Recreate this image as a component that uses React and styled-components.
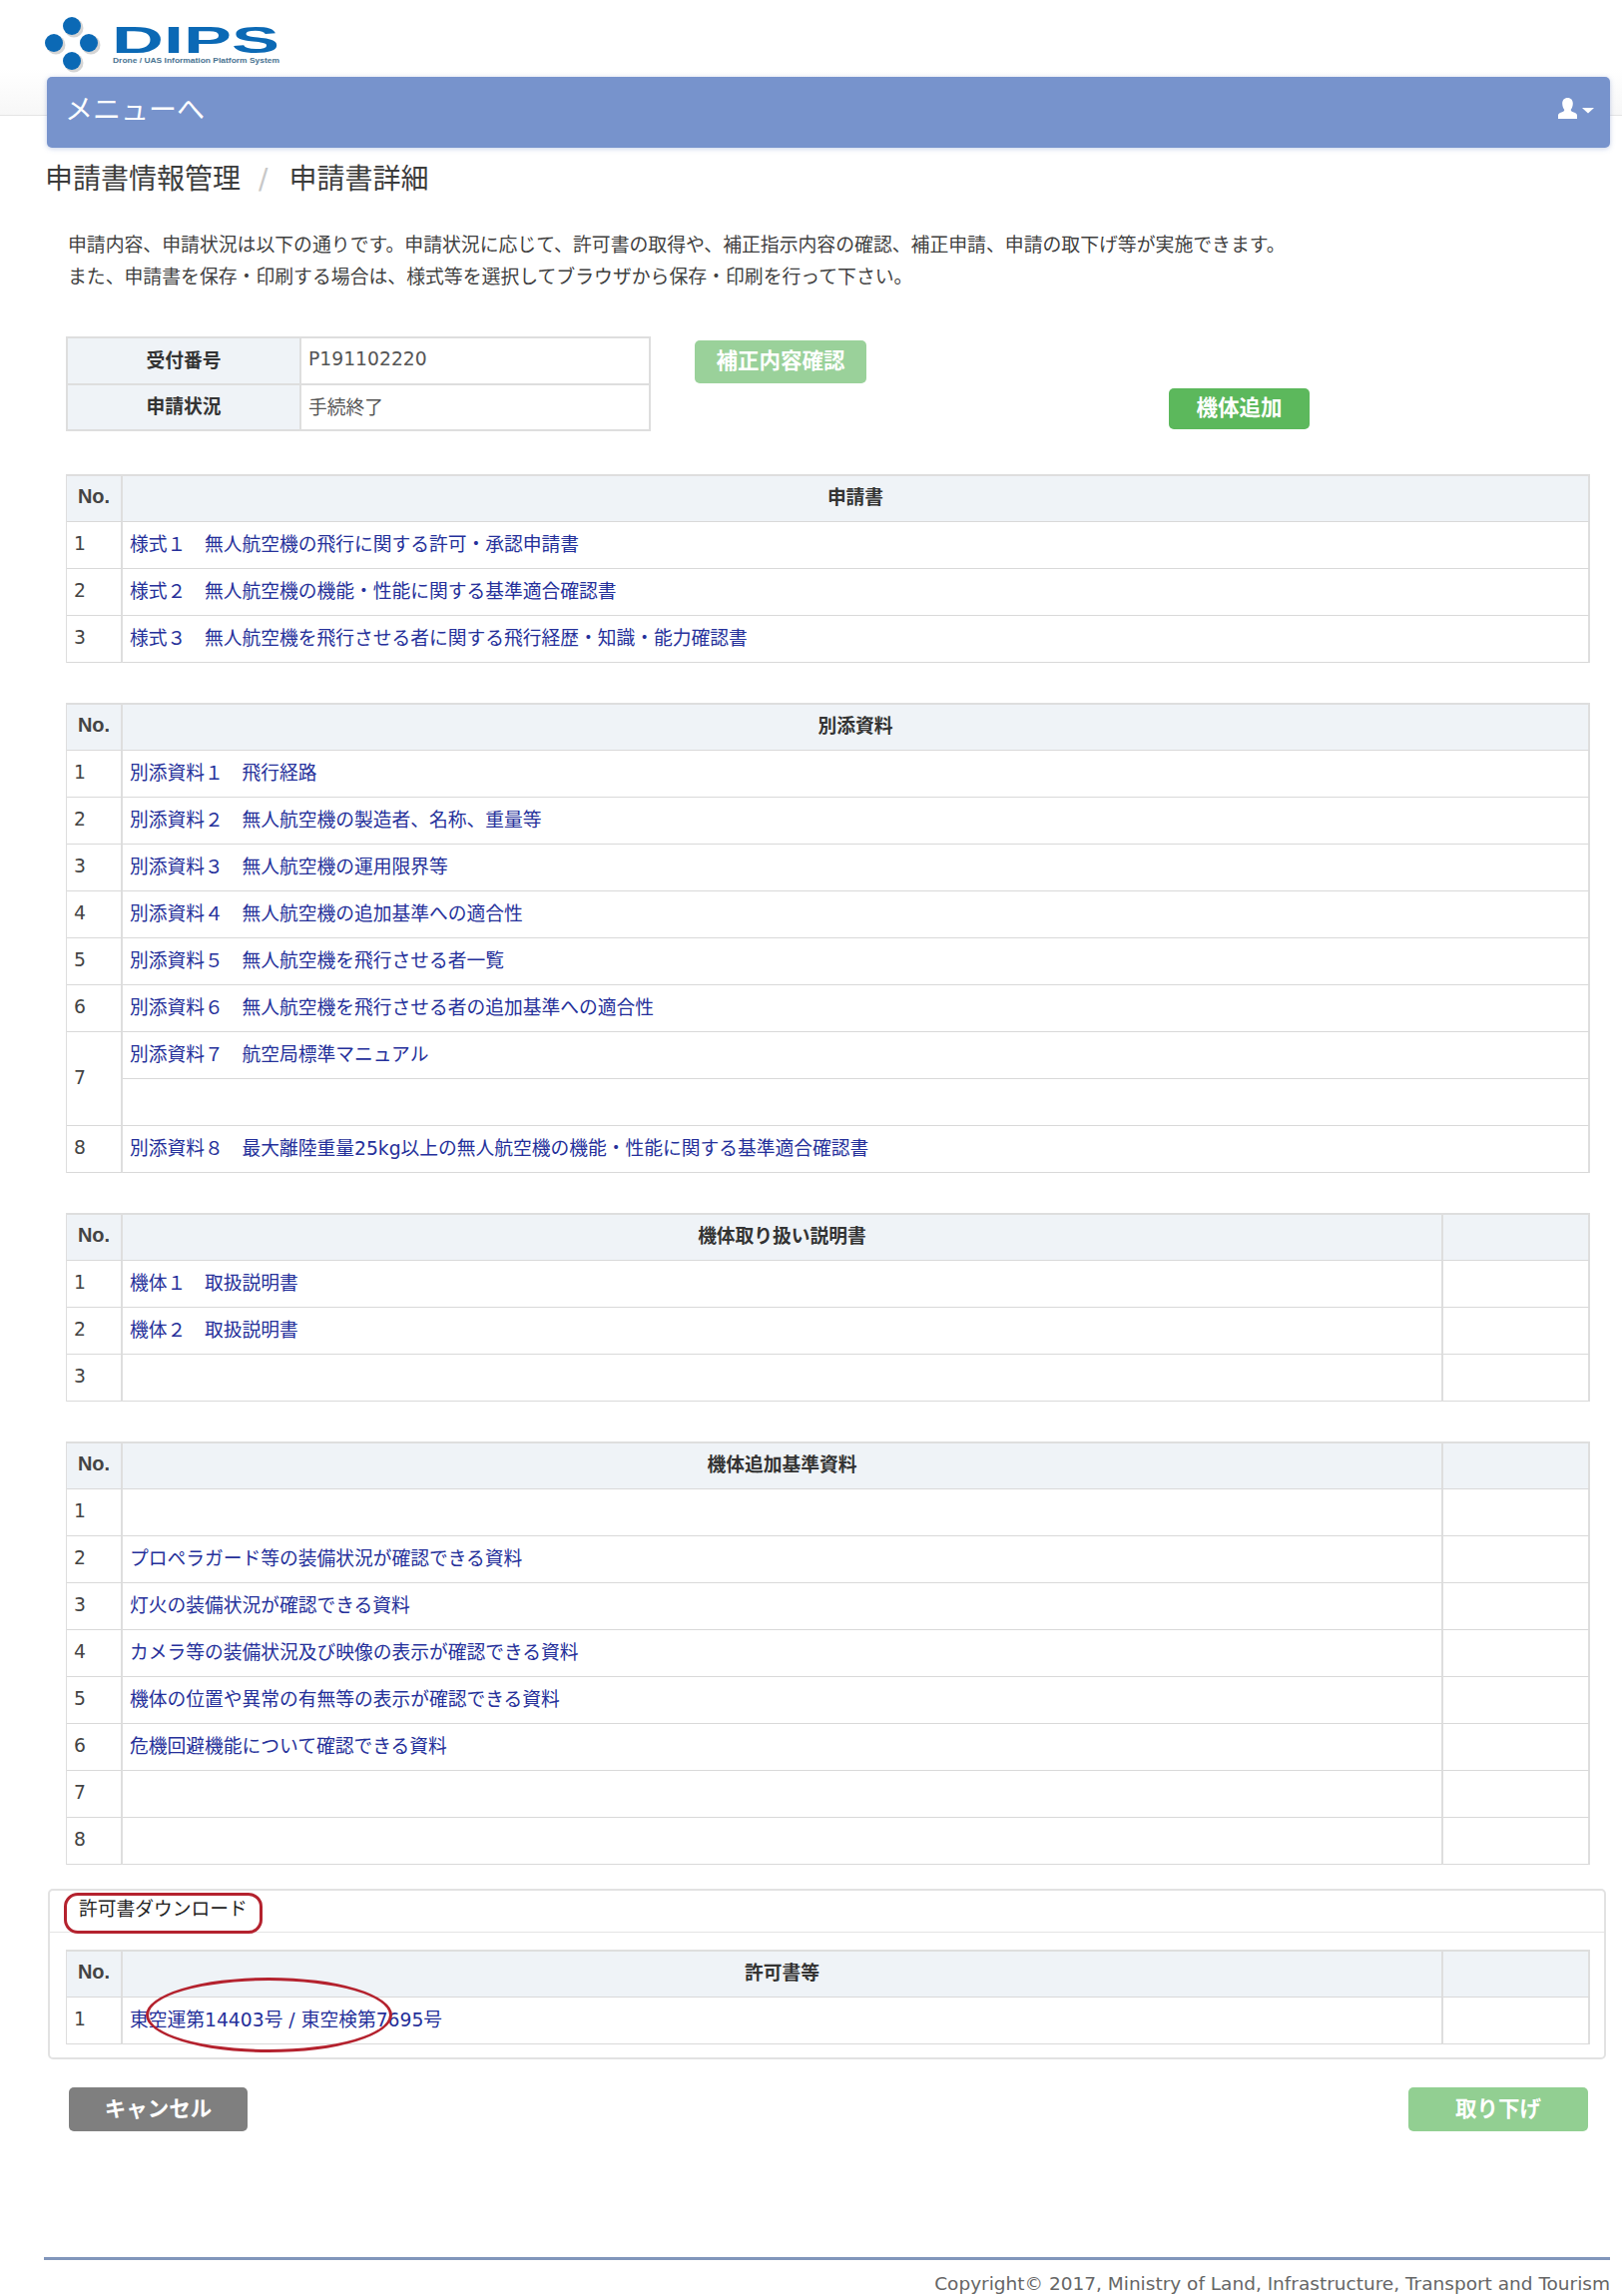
import React from "react";
import styled, { createGlobalStyle } from "styled-components";

const Global = createGlobalStyle`
  html, body { margin: 0; padding: 0; background: #fff; }
  body {
    font-family: "DejaVu Sans", "Noto Sans CJK JP", sans-serif;
    font-size: 18.75px;
    color: #444;
  }
  * { box-sizing: border-box; }
`;

const Page = styled.div`
  height: 2300px;
  overflow: hidden;
  background:
    linear-gradient(#e4e4e4, #e4e4e4) 0 115px / 100% 1px no-repeat,
    linear-gradient(#ffffff 60%, #f7f7f7) 0 0 / 100% 115px no-repeat,
    #fff;
`;
const LogoSvg = styled.svg`
  display: block;
  width: 300px;
  height: 77px;
`;
const Navbar = styled.nav`
  height: 71px;
  margin: 0 12px 0 47px;
  padding: 0 16px 0 18px;
  background: #7793cc;
  border-radius: 5px;
  box-shadow: 0 1px 5px rgba(90, 120, 190, 0.35);
  display: flex;
  align-items: center;
  justify-content: space-between;
`;
const Brand = styled.a`
  color: #fff;
  font-size: 28px;
  line-height: 1;
  margin-bottom: 4px;
`;
const UserIcon = styled.svg`
  display: block;
  width: 36px;
  height: 21px;
  margin-bottom: 9px;
`;
const Breadcrumb = styled.div`
  margin: 12px 0 0 45px;
  height: 40px;
  line-height: 40px;
  font-size: 28px;
  color: #3c3c3c;
  display: flex;
`;
const Crumb = styled.span`
  color: #c8c8c8;
  margin: 0 21px 0 18px;
`;
const Intro = styled.p`
  margin: 30px 0 0 68px;
  line-height: 32px;
  font-size: 18.85px;
  color: #3f3f3f;
`;
const Content = styled.main`
  margin: 43px 32px 0 66px;
`;
const InfoRow = styled.div`
  display: flex;
  height: 95px;
  margin-bottom: 43px;
`;
const InfoTable = styled.table`
  width: 586px;
  height: 95px;
  table-layout: fixed;
  border-collapse: separate;
  border-spacing: 0;
  border-top: 2px solid #dedede;
  border-left: 2px solid #dedede;
`;
const InfoHead = styled.th`
  width: 234px;
  padding: 0 0 4px;
  background: #eff3f7;
  font-weight: 600;
  color: #333;
  text-align: center;
  border-right: 2px solid #dedede;
  border-bottom: 2px solid #dedede;
`;
const InfoValue = styled.td`
  padding: 0 7px 3px;
  color: #555;
  border-right: 2px solid #dedede;
  border-bottom: 2px solid #dedede;
`;
const Button = styled.button`
  font-family: inherit;
  font-size: 21.5px;
  font-weight: 700;
  color: #fff;
  border: 0;
  border-radius: 5px;
  padding: 0 0 6px;
  background: ${(p) => p.$bg};
  width: ${(p) => p.$w}px;
  height: ${(p) => p.$h}px;
`;
const ReviewButton = styled(Button)`
  margin: 4px 0 0 44px;
`;
const AddButton = styled(Button)`
  margin: 52px 0 0 303px;
`;
const Table = styled.table`
  width: 100%;
  table-layout: fixed;
  border-collapse: separate;
  border-spacing: 0;
  border-top: 2px solid #dedede;
  border-left: 1px solid #dedede;
  margin-bottom: ${(p) => p.$gap}px;
`;
const Head = styled.th`
  height: 46px;
  background: #eff3f7;
  color: #333;
  font-weight: 600;
  font-size: 18.75px;
  text-align: center;
  padding: 0 0 6px;
  border-right: 2px solid #dedede;
  border-bottom: 1px solid #d9d9d9;
`;
const NoHead = styled(Head)`
  font-family: "Liberation Sans", sans-serif;
  font-weight: 700;
  font-size: 20px;
  color: #444;
  padding-bottom: 4px;
`;
const Cell = styled.td`
  height: 47px;
  padding: 0 0 5px 7px;
  border-right: 2px solid #dedede;
  border-bottom: 1px solid #d9d9d9;
  color: #444;
  font-size: 18.75px;
  white-space: nowrap;
`;
const NoCell = styled(Cell)`
  padding-bottom: 3px;
`;
const DocLink = styled.a`
  color: #25309a;
  text-decoration: none;
`;
const Panel = styled.section`
  position: relative;
  margin: 24px -16px 0 -18px;
  height: 171px;
  border: 2px solid #e2e2e2;
  border-radius: 5px;
`;
const PanelTitle = styled.h3`
  margin: 0;
  height: 42px;
  padding: 0 0 0 29px;
  line-height: 37px;
  font-size: 18.75px;
  font-weight: 400;
  color: #222;
  border-bottom: 1px solid #e4e4e4;
`;
const PanelBody = styled.div`
  padding: 17px 14px 0 16px;
`;
const Mark = styled.span`
  position: absolute;
  border: 3px solid #b4222e;
  pointer-events: none;
`;
const TitleMark = styled(Mark)`
  left: 14px;
  top: 2px;
  width: 199px;
  height: 41px;
  border-radius: 14px;
`;
const ValueMark = styled(Mark)`
  left: 96px;
  top: 87px;
  width: 247px;
  height: 75px;
  border-radius: 50%;
`;
const Actions = styled.div`
  display: flex;
  justify-content: space-between;
  margin: 28px 2px 0 3px;
`;
const Footer = styled.footer`
  margin: 126px 12px 0 44px;
  border-top: 3px solid #8196bb;
  padding-top: 11px;
  text-align: right;
  line-height: 26px;
  color: #666;
  font-size: 18.5px;
`;

const empty = "";
const sections = [
  {
    title: "申請書",
    rows: [
      "様式１　無人航空機の飛行に関する許可・承認申請書",
      "様式２　無人航空機の機能・性能に関する基準適合確認書",
      "様式３　無人航空機を飛行させる者に関する飛行経歴・知識・能力確認書",
    ],
  },
  {
    title: "別添資料",
    rows: [
      "別添資料１　飛行経路",
      "別添資料２　無人航空機の製造者、名称、重量等",
      "別添資料３　無人航空機の運用限界等",
      "別添資料４　無人航空機の追加基準への適合性",
      "別添資料５　無人航空機を飛行させる者一覧",
      "別添資料６　無人航空機を飛行させる者の追加基準への適合性",
      ["別添資料７　航空局標準マニュアル", empty],
      "別添資料８　最大離陸重量25kg以上の無人航空機の機能・性能に関する基準適合確認書",
    ],
  },
  {
    title: "機体取り扱い説明書",
    extra: true,
    rows: ["機体１　取扱説明書", "機体２　取扱説明書", empty],
  },
  {
    title: "機体追加基準資料",
    extra: true,
    rows: [
      empty,
      "プロペラガード等の装備状況が確認できる資料",
      "灯火の装備状況が確認できる資料",
      "カメラ等の装備状況及び映像の表示が確認できる資料",
      "機体の位置や異常の有無等の表示が確認できる資料",
      "危機回避機能について確認できる資料",
      empty,
      empty,
    ],
  },
];

function DocTable({ title, rows, extra, gap }) {
  return (
    <Table $gap={gap}>
      <colgroup>
        <col style={{ width: 56 }} />
        <col />
        {extra && <col style={{ width: 147 }} />}
      </colgroup>
      <thead>
        <tr>
          <NoHead>No.</NoHead>
          <Head>{title}</Head>
          {extra && <Head />}
        </tr>
      </thead>
      <tbody>
        {rows.map((row, i) =>
          Array.isArray(row) ? (
            <React.Fragment key={i}>
              <tr>
                <NoCell rowSpan={2}>{i + 1}</NoCell>
                <Cell><DocLink>{row[0]}</DocLink></Cell>
                {extra && <Cell />}
              </tr>
              <tr>
                <Cell><DocLink>{row[1]}</DocLink></Cell>
                {extra && <Cell />}
              </tr>
            </React.Fragment>
          ) : (
            <tr key={i}>
              <NoCell>{i + 1}</NoCell>
              <Cell><DocLink>{row}</DocLink></Cell>
              {extra && <Cell />}
            </tr>
          )
        )}
      </tbody>
    </Table>
  );
}

function Logo() {
  const dots = [[72, 26], [54, 43], [89, 43], [72, 61]];
  return (
    <LogoSvg viewBox="0 0 300 77" aria-label="DIPS">
      {dots.map(([x, y]) => (
        <circle key={`s${x}${y}`} cx={x + 2} cy={y + 2} r="9.5" fill="#d4d4d4" />
      ))}
      {dots.map(([x, y]) => (
        <circle key={`c${x}${y}`} cx={x} cy={y} r="9" fill="#0b69b5" />
      ))}
      <text
        x="112"
        y="53"
        textLength="168"
        lengthAdjust="spacingAndGlyphs"
        fontFamily="Liberation Sans"
        fontWeight="700"
        fontSize="36"
        fill="#0b69b5"
      >
        DIPS
      </text>
      <text
        x="113"
        y="63"
        textLength="167"
        lengthAdjust="spacingAndGlyphs"
        fontFamily="Liberation Sans"
        fontWeight="700"
        fontSize="7"
        fill="#4a7391"
      >
        Drone / UAS Information Platform System
      </text>
    </LogoSvg>
  );
}

export default function App() {
  return (
    <Page>
      <Global />
      <Logo />
      <Navbar>
        <Brand>メニューへ</Brand>
        <UserIcon viewBox="0 0 36 21" aria-hidden="true">
          <path
            fill="#fff"
            d="M9.500 0c3.400 0 5.300 2.300 5.300 5.800 0 2.600-.9 4.700-2.100 6.100.1 1.200 1 1.900 3 2.600 1.900.7 3.300 1.400 3.300 3V21H0v-3.500c0-1.600 1.400-2.300 3.300-3 2-.7 2.900-1.400 3-2.600-1.200-1.400-2.100-3.500-2.100-6.100C4.200 2.300 6.100 0 9.500 0z"
          />
          <path fill="#fff" d="M24 10h12l-6 5.500z" />
        </UserIcon>
      </Navbar>
      <Breadcrumb>
        申請書情報管理<Crumb>/</Crumb>申請書詳細
      </Breadcrumb>
      <Intro>
        申請内容、申請状況は以下の通りです。申請状況に応じて、許可書の取得や、補正指示内容の確認、補正申請、申請の取下げ等が実施できます。
        <br />
        また、申請書を保存・印刷する場合は、様式等を選択してブラウザから保存・印刷を行って下さい。
      </Intro>
      <Content>
        <InfoRow>
          <InfoTable>
            <tbody>
              <tr>
                <InfoHead>受付番号</InfoHead>
                <InfoValue>P191102220</InfoValue>
              </tr>
              <tr>
                <InfoHead>申請状況</InfoHead>
                <InfoValue>手続終了</InfoValue>
              </tr>
            </tbody>
          </InfoTable>
          <ReviewButton $bg="#9ad19a" $w={172} $h={43}>補正内容確認</ReviewButton>
          <AddButton $bg="#5cb85c" $w={141} $h={41}>機体追加</AddButton>
        </InfoRow>
        {sections.map((s, i) => (
          <DocTable key={s.title} {...s} gap={i === sections.length - 1 ? 0 : 40} />
        ))}
        <Panel>
          <PanelTitle>許可書ダウンロード</PanelTitle>
          <PanelBody>
            <DocTable
              title="許可書等"
              extra
              gap={0}
              rows={["東空運第14403号 / 東空検第7695号"]}
            />
          </PanelBody>
          <TitleMark />
          <ValueMark />
        </Panel>
        <Actions>
          <Button $bg="#7f7f7f" $w={179} $h={44}>キャンセル</Button>
          <Button $bg="#92cf92" $w={180} $h={44}>取り下げ</Button>
        </Actions>
      </Content>
      <Footer>Copyright© 2017, Ministry of Land, Infrastructure, Transport and Tourism</Footer>
    </Page>
  );
}
